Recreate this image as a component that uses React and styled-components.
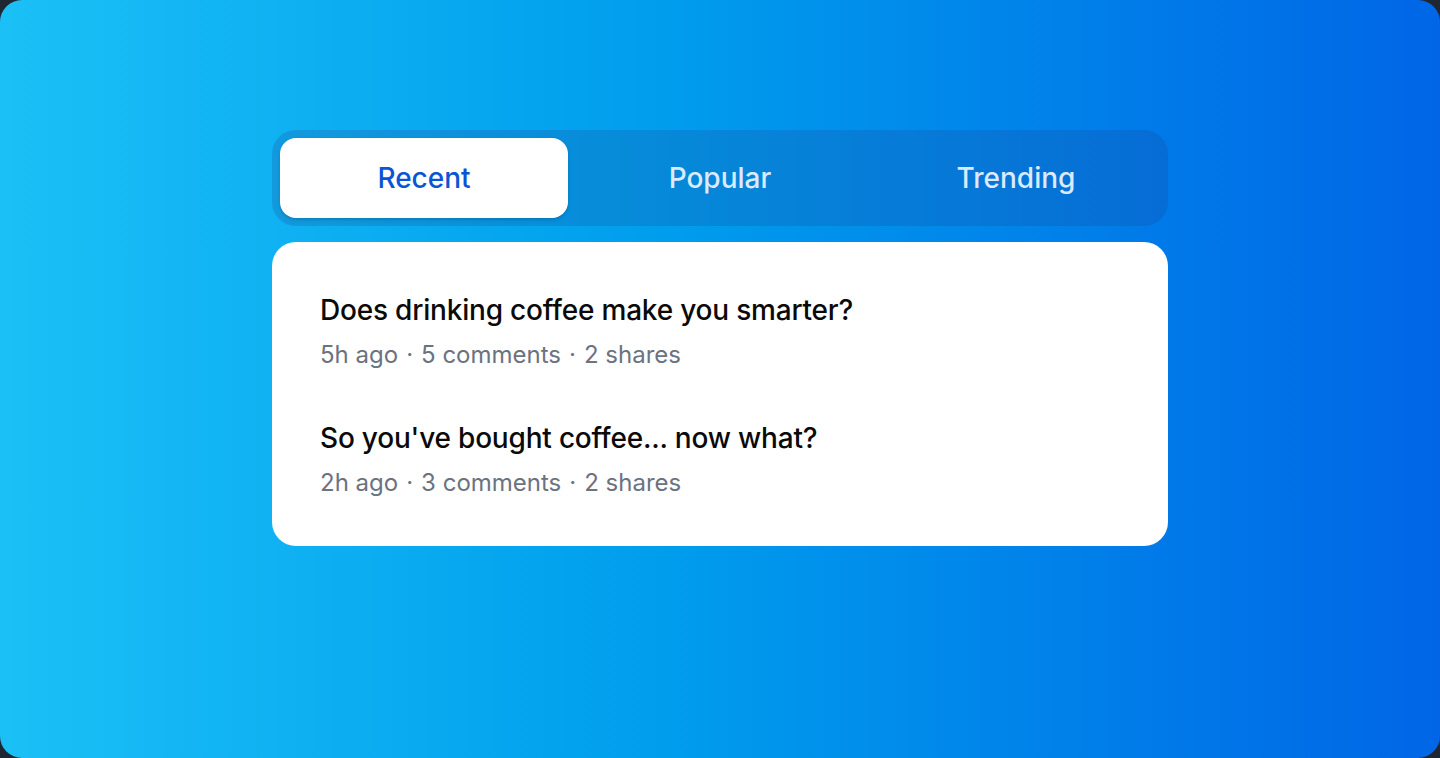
import React, { useState } from "react";
import styled, { createGlobalStyle } from "styled-components";

const Global = createGlobalStyle`
  html, body { margin: 0; padding: 0; background: #1f2733; }
  body { font-family: Inter, "Noto Sans", "Liberation Sans", sans-serif; -webkit-font-smoothing: antialiased; }
  * { box-sizing: border-box; }
`;

const Frame = styled.div`
  width: 1440px;
  height: 758px;
  border-radius: 22px;
  background: linear-gradient(90deg, #1bc0f6 0%, #009eed 45%, #0066e6 100%);
  display: flex;
  justify-content: center;
  padding-top: 130px;
  overflow: hidden;
`;

const Column = styled.div`
  width: 896px;
  display: flex;
  flex-direction: column;
  gap: 16px;
`;

const TabList = styled.div`
  display: grid;
  grid-template-columns: repeat(3, 1fr);
  gap: 8px;
  padding: 8px;
  border-radius: 24px;
  background: rgba(30, 58, 138, 0.2);
`;

const Tab = styled.button`
  height: 80px;
  border: 0;
  border-radius: 16px;
  font-family: inherit;
  font-size: 28px;
  line-height: 40px;
  font-weight: 500;
  cursor: pointer;
  background: ${(p) => (p.$active ? "#ffffff" : "transparent")};
  color: ${(p) => (p.$active ? "#0b55d4" : "#dbeafe")};
  box-shadow: ${(p) => (p.$active ? "0 2px 4px rgba(0,0,0,0.1), 0 2px 2px rgba(0,0,0,0.06)" : "none")};
  outline: none;
`;

const Panel = styled.ul`
  margin: 0;
  list-style: none;
  background: #ffffff;
  border-radius: 24px;
  padding: 24px;
`;

const Item = styled.li`
  padding: 24px 24px 23px;
  border-radius: 12px;
`;

const Title = styled.h3`
  margin: 0;
  font-size: 28px;
  line-height: 40px;
  font-weight: 500;
  letter-spacing: -0.2px;
  color: #0a0a0a;
`;

const Meta = styled.ul`
  margin: 9px 0 0;
  padding: 0;
  list-style: none;
  display: flex;
  gap: 8px;
  font-size: 24px;
  line-height: 32px;
  font-weight: 400;
  color: #6b7280;
`;

const posts = {
  Recent: [
    { title: "Does drinking coffee make you smarter?", date: "5h ago", comments: 5, shares: 2 },
    { title: "So you've bought coffee... now what?", date: "2h ago", comments: 3, shares: 2 },
  ],
  Popular: [
    { title: "Is tech making coffee better or worse?", date: "Jan 7", comments: 29, shares: 16 },
    { title: "The most innovative things happening in coffee", date: "Mar 19", comments: 24, shares: 12 },
  ],
  Trending: [
    { title: "Ask Me Anything: 10 answers to your questions about coffee", date: "2d ago", comments: 9, shares: 5 },
    { title: "The worst advice we've ever heard about coffee", date: "4d ago", comments: 1, shares: 2 },
  ],
};

export default function App() {
  const [tab, setTab] = useState("Recent");
  return (
    <>
      <Global />
      <Frame>
        <Column>
          <TabList>
            {Object.keys(posts).map((k) => (
              <Tab key={k} $active={tab === k} onClick={() => setTab(k)}>
                {k}
              </Tab>
            ))}
          </TabList>
          <Panel>
            {posts[tab].map((p) => (
              <Item key={p.title}>
                <Title>{p.title}</Title>
                <Meta>
                  <li>{p.date}</li>
                  <li>&middot;</li>
                  <li>{p.comments} comments</li>
                  <li>&middot;</li>
                  <li>{p.shares} shares</li>
                </Meta>
              </Item>
            ))}
          </Panel>
        </Column>
      </Frame>
    </>
  );
}
